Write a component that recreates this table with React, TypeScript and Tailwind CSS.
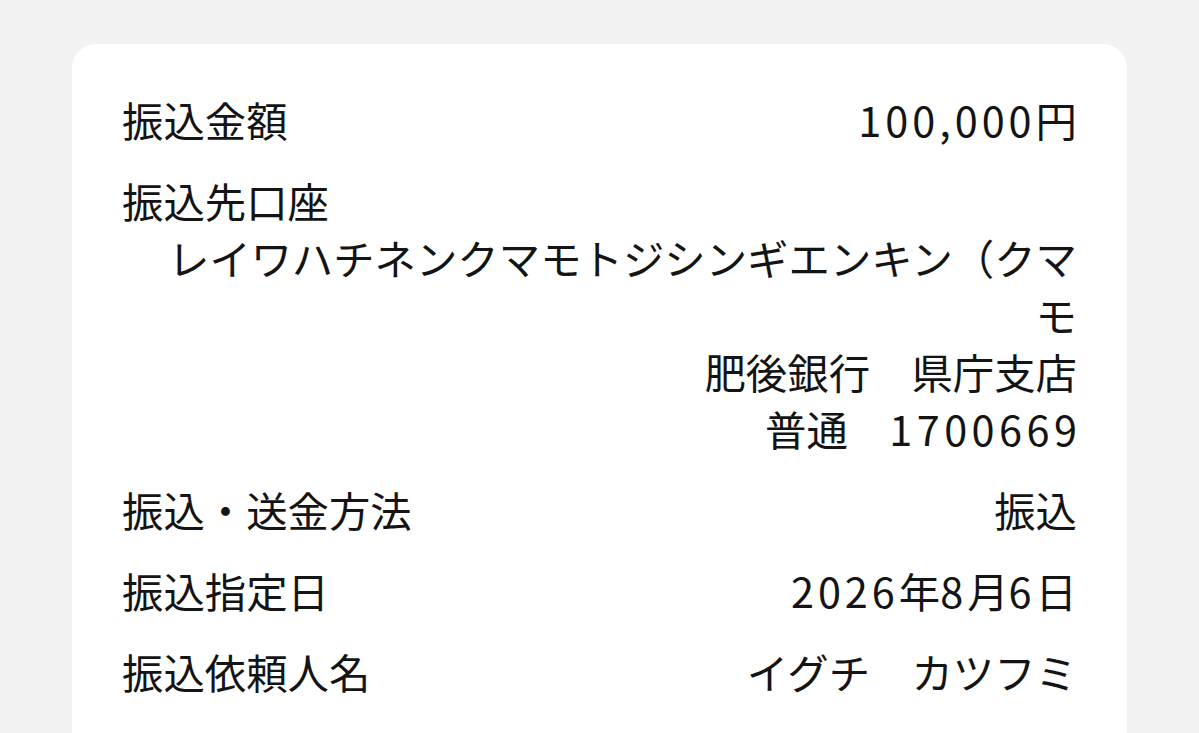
import React from "react";

const N = ({ children, end }: { children: React.ReactNode; end?: boolean }) => (
  <span className={end ? "tracking-[4.5px] mr-[-4.5px]" : "tracking-[4px]"}>{children}</span>
);

function Row({ label, value }: { label: string; value: React.ReactNode }) {
  return (
    <div className="flex justify-between">
      <div>{label}</div>
      <div className="text-right">{value}</div>
    </div>
  );
}

export default function App() {
  return (
    <div className="h-[733px] overflow-hidden bg-[#f2f2f2] px-[72px] pt-[44px]">
      <div className="min-h-[760px] rounded-[24px] bg-white px-[50px] pt-[47px] font-['Noto_Sans_CJK_JP','Noto_Sans',sans-serif] text-[41.4px] leading-[57px] text-[#141414]">
        <div className="flex flex-col gap-6">
          <Row
            label="振込金額"
            value={
              <>
                <N>100,000</N>円
              </>
            }
          />
          <div className="flex flex-col">
            <div>振込先口座</div>
            <div className="pl-[40px] text-right">
              <div>レイワハチネンクマモトジシンギエンキン（クマ</div>
              <div>モ</div>
              <div>肥後銀行　県庁支店</div>
              <div>
                普通　<N end>1700669</N>
              </div>
            </div>
          </div>
          <Row label="振込・送金方法" value="振込" />
          <Row
            label="振込指定日"
            value={
              <>
                <N>2026</N>年<N>8</N>月<N>6</N>日
              </>
            }
          />
          <Row label="振込依頼人名" value="イグチ　カツフミ" />
        </div>
      </div>
    </div>
  );
}
